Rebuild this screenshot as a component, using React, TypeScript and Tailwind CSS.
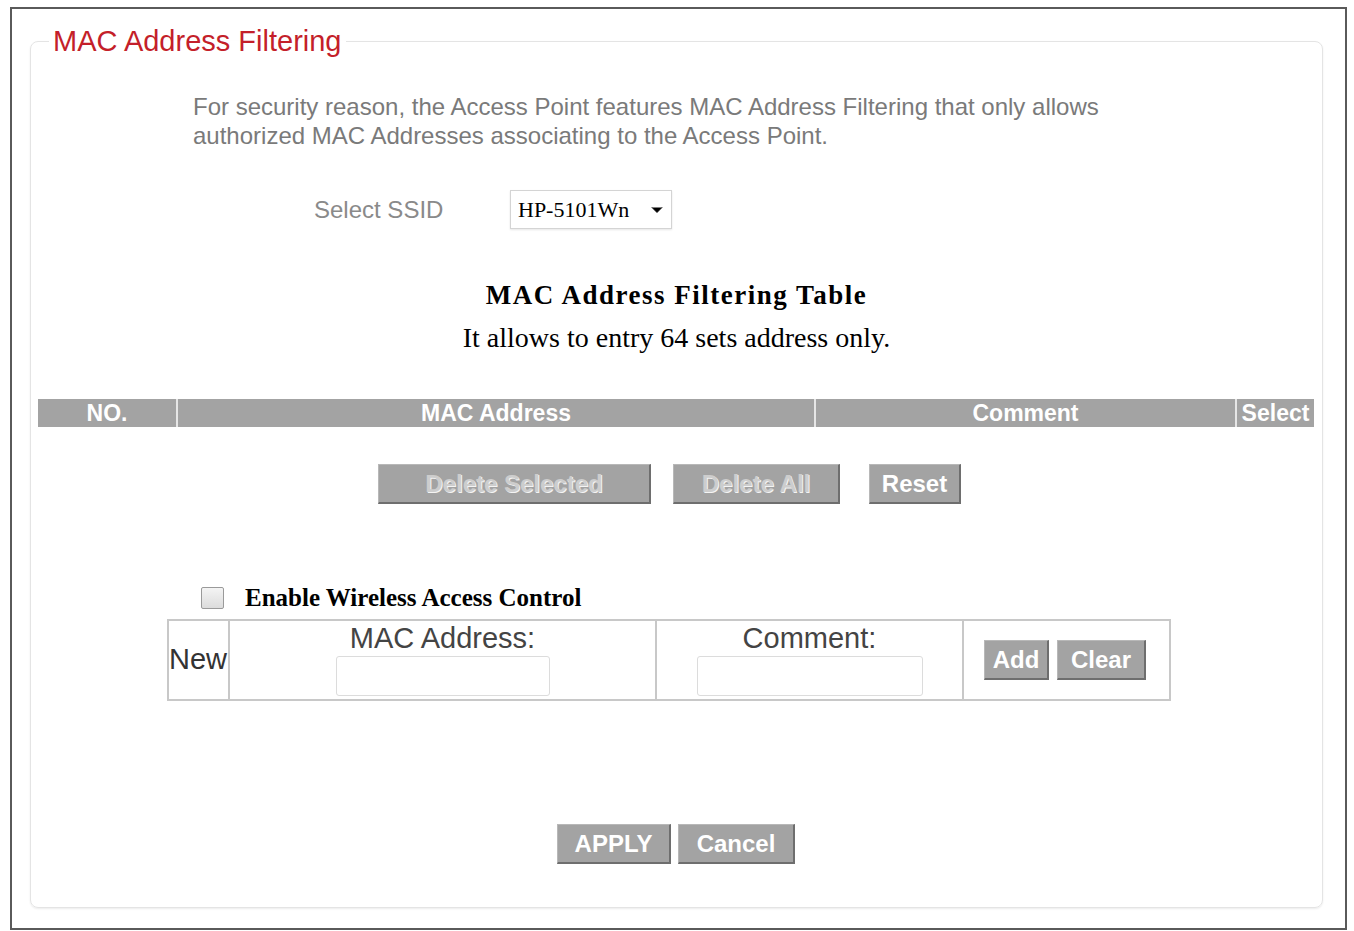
import { ChevronDown } from 'lucide-react'

const sans = "font-['Liberation_Sans',Arial,sans-serif]"
const narrow = "font-['Liberation_Sans_Narrow','Liberation_Sans',Arial,sans-serif]"
const serif = "font-['Liberation_Serif','Times_New_Roman',serif]"

function GrayButton({ label, disabled, className }: { label: string; disabled?: boolean; className: string }) {
  return (
    <button
      className={`h-[40px] bg-[#a3a3a3] border-r-2 border-b-2 border-[#6e6e6e] border-t border-l border-t-[#b8b8b8] border-l-[#b8b8b8] text-[24px] leading-[36px] font-bold ${narrow} ${
        disabled ? 'text-[#cdcdcd] [text-shadow:1px_1px_0_#f4f4f4]' : 'text-white'
      } ${className}`}
    >
      {label}
    </button>
  )
}

export default function App() {
  return (
    <div className="w-[1354px] h-[931px] bg-white pt-[7px] pl-[10px]">
      <div className="w-[1337px] h-[923px] border-2 border-[#5a5a5a] pl-[18px] pr-[22px] pt-[17px]">
        <fieldset className="h-[882px] border border-[#e4e4e4] rounded-lg shadow-[0_1px_2px_rgba(0,0,0,0.08)]">
          <legend className={`ml-[18px] px-[4px] text-[29px] leading-[30px] text-[#c41f2a] ${sans}`}>
            MAC Address Filtering
          </legend>

          <p className={`mt-[36px] ml-[162px] w-[1000px] text-[24px] leading-[29px] text-[#7a7a7a] ${sans}`}>
            For security reason, the Access Point features MAC Address Filtering that only allows
            <br />
            authorized MAC Addresses associating to the Access Point.
          </p>

          <div className="mt-[40px] flex items-center">
            <span className={`ml-[283px] w-[196px] text-[24px] text-[#8a8a8a] ${sans}`}>Select SSID</span>
            <div className="w-[162px] h-[39px] border border-[#d4d4d4] shadow-[0_1px_2px_rgba(0,0,0,0.1)] flex items-center justify-between pl-[7px] pr-[4px]">
              <span className={`text-[22px] text-black ${serif}`}>HP-5101Wn</span>
              <ChevronDown className="w-[20px] h-[20px] fill-black stroke-black" strokeWidth={1} />
            </div>
          </div>

          <div className={`mt-[51px] text-center ${serif}`}>
            <div className="text-[27px] leading-[30px] font-bold tracking-[1.5px] text-black">MAC Address Filtering Table</div>
            <div className="mt-[13px] text-[28px] leading-[30px] text-black">It allows to entry 64 sets address only.</div>
          </div>

          <div
            className={`mt-[46px] ml-[7px] w-[1276px] h-[28px] bg-[#a3a3a3] flex text-white text-[23px] leading-[28px] font-bold ${narrow}`}
          >
            <div className="w-[140px] text-center border-r-2 border-[#e6e6e6]">NO.</div>
            <div className="w-[638px] text-center border-r-2 border-[#e6e6e6]">MAC Address</div>
            <div className="w-[421px] text-center border-r-2 border-[#e6e6e6]">Comment</div>
            <div className="flex-1 text-center">Select</div>
          </div>

          <div className="mt-[37px] flex">
            <GrayButton label="Delete Selected" disabled className="ml-[347px] w-[273px]" />
            <GrayButton label="Delete All" disabled className="ml-[22px] w-[167px]" />
            <GrayButton label="Reset" className="ml-[29px] w-[92px]" />
          </div>

          <div className="mt-[82px] h-[23px] flex items-center">
            <div className="ml-[170px] w-[23px] h-[22px] border border-[#9a9a9a] bg-gradient-to-b from-[#f4f4f4] to-[#dcdcdc] rounded-[2px]" />
            <span className={`ml-[21px] text-[25px] leading-[23px] font-bold text-black ${serif}`}>
              Enable Wireless Access Control
            </span>
          </div>

          <div className="mt-[10px] ml-[136px] w-[1004px] h-[82px] border-2 border-[#c8c8c8] flex">
            <div className={`w-[61px] border-r-2 border-[#c8c8c8] flex items-center text-[29px] text-[#333] ${sans}`}>
              New
            </div>
            <div className="w-[427px] border-r-2 border-[#c8c8c8] flex flex-col items-center">
              <span className={`text-[29px] leading-[34px] text-[#444] ${sans}`}>MAC Address:</span>
              <div className="mt-[1px] w-[214px] h-[40px] border border-[#dcdcdc] rounded-[3px]" />
            </div>
            <div className="w-[307px] border-r-2 border-[#c8c8c8] flex flex-col items-center">
              <span className={`text-[29px] leading-[34px] text-[#444] ${sans}`}>Comment:</span>
              <div className="mt-[1px] w-[226px] h-[40px] border border-[#dcdcdc] rounded-[3px]" />
            </div>
            <div className="flex-1 flex items-center">
              <GrayButton label="Add" className="ml-[20px] w-[65px]" />
              <GrayButton label="Clear" className="ml-[8px] w-[89px]" />
            </div>
          </div>

          <div className="mt-[123px] flex">
            <GrayButton label="APPLY" className="ml-[526px] w-[114px]" />
            <GrayButton label="Cancel" className="ml-[7px] w-[117px]" />
          </div>
        </fieldset>
      </div>
    </div>
  )
}
